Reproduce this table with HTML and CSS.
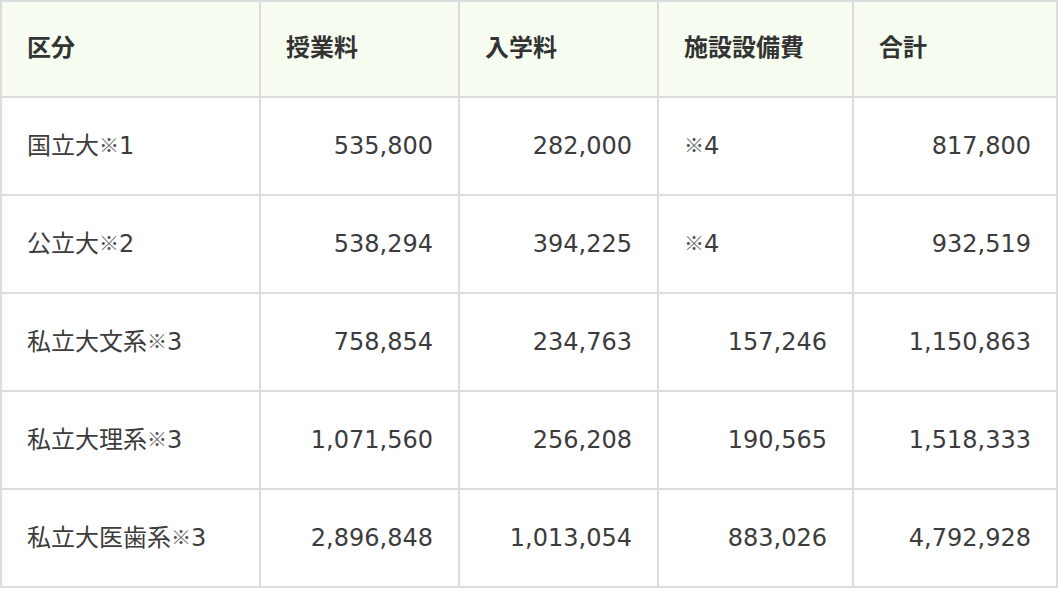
FILE: index.html
```html
<!DOCTYPE html>
<html lang="ja">
<head>
<meta charset="utf-8">
<title>学費</title>
<link rel="stylesheet" href="styles.css">
</head>
<body>
<table class="fees">
  <colgroup>
    <col class="c1"><col class="c2"><col class="c3"><col class="c4"><col class="c5">
  </colgroup>
  <thead>
    <tr><th>区分</th><th>授業料</th><th>入学料</th><th>施設設備費</th><th>合計</th></tr>
  </thead>
  <tbody>
    <tr><td>国立大<span class="mark">※</span>1</td><td class="num">535,800</td><td class="num">282,000</td><td><span class="mark">※</span>4</td><td class="num">817,800</td></tr>
    <tr><td>公立大<span class="mark">※</span>2</td><td class="num">538,294</td><td class="num">394,225</td><td><span class="mark">※</span>4</td><td class="num">932,519</td></tr>
    <tr><td>私立大文系<span class="mark">※</span>3</td><td class="num">758,854</td><td class="num">234,763</td><td class="num">157,246</td><td class="num">1,150,863</td></tr>
    <tr><td>私立大理系<span class="mark">※</span>3</td><td class="num">1,071,560</td><td class="num">256,208</td><td class="num">190,565</td><td class="num">1,518,333</td></tr>
    <tr><td>私立大医歯系<span class="mark">※</span>3</td><td class="num">2,896,848</td><td class="num">1,013,054</td><td class="num">883,026</td><td class="num">4,792,928</td></tr>
  </tbody>
</table>
</body>
</html>
```
FILE: styles.css
```css
html, body {
  margin: 0;
  padding: 0;
  background: #ffffff;
}
body {
  font-family: "DejaVu Sans", "Noto Sans CJK JP", sans-serif;
  font-size: 24px;
  line-height: 1.2;
  color: #3c3c3c;
}
.fees {
  border-collapse: collapse;
  table-layout: fixed;
  width: 1056px;
}
.c1 { width: 259px; }
.c2 { width: 199px; }
.c3 { width: 199px; }
.c4 { width: 195px; }
.c5 { width: 204px; }
.fees th,
.fees td {
  border: 2px solid #dcdcdc;
  padding: 0 25px;
  text-align: left;
  vertical-align: middle;
  white-space: nowrap;
}
.fees thead tr { height: 96px; }
.fees tbody tr { height: 98px; }
.fees th {
  background: #f6fdf0;
  font-weight: bold;
  color: #333333;
  padding-bottom: 2px;
}
.fees td.num { text-align: right; }
.mark {
  font-family: "Noto Sans CJK JP", sans-serif;
  font-size: 20px;
  font-weight: 400;
  color: #555555;
  vertical-align: 1px;
}
```
